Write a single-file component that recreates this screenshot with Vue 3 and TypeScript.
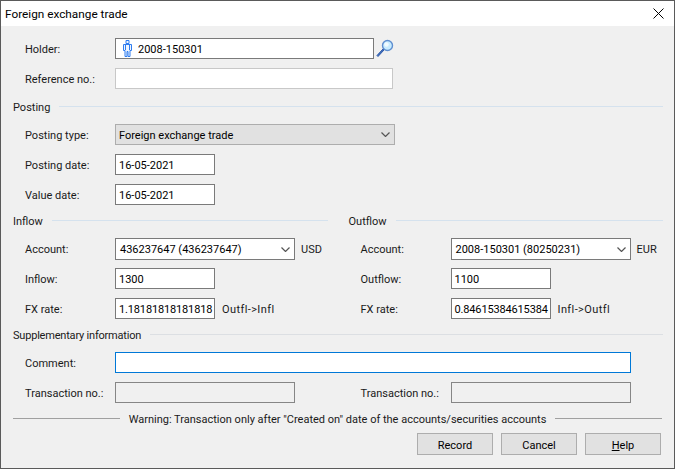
<script setup lang="ts">
interface FlowColumn {
  title: string
  account: string
  currency: string
  amountLabel: string
  amount: string
  rate: string
  direction: string
}

const columns: FlowColumn[] = [
  { title: 'Inflow', account: '436237647 (436237647)', currency: 'USD', amountLabel: 'Inflow:', amount: '1300', rate: '1.18181818181818', direction: 'Outfl->Infl' },
  { title: 'Outflow', account: '2008-150301 (80250231)', currency: 'EUR', amountLabel: 'Outflow:', amount: '1100', rate: '0.84615384615384', direction: 'Infl->Outfl' },
]
</script>

<template>
  <div class="window">
    <header class="titlebar">
      <span class="title">Foreign exchange trade</span>
      <svg class="close" width="11" height="11" viewBox="0 0 11 11">
        <path d="M0.5 0.5L10.5 10.5M10.5 0.5L0.5 10.5" stroke="#000" stroke-width="1" fill="none" />
      </svg>
    </header>

    <main class="body">
      <div class="row first">
        <label class="label">Holder:</label>
        <div class="field holder">
          <svg class="person" width="9" height="17" viewBox="0 0 9 17">
            <path d="M3 .5h3v3h-3zM.5 4.5h8v6h-1.5v6h-2v-5h-1v5h-2v-6h-1.5zM2.5 5v5M6.5 5v5" fill="#eef5ff" stroke="#2f7df0" stroke-width="1" />
          </svg>
          <span>2008-150301</span>
        </div>
        <svg class="search" width="18" height="18" viewBox="0 0 18 18">
          <path d="M1 16.5L2 17.5L8 11L7 10Z" fill="#3f6fc0" stroke="#2f5aa8" stroke-width="1" />
          <circle cx="11.5" cy="6.5" r="5" fill="#c8ecff" stroke="#5f8fd0" stroke-width="1.4" />
          <circle cx="10.5" cy="5.5" r="2.2" fill="#f0fbff" />
        </svg>
      </div>
      <div class="row">
        <label class="label">Reference no.:</label>
        <div class="field reference"></div>
      </div>

      <div class="section"><span>Posting</span><i class="rule blue"></i></div>
      <div class="row after-section">
        <label class="label">Posting type:</label>
        <div class="field combo posting-type">
          <span>Foreign exchange trade</span>
          <svg class="chevron" width="9" height="5" viewBox="0 0 9 5"><path d="M.5 .5L4.5 4.5L8.5 .5" fill="none" stroke="#555" stroke-width="1.2" /></svg>
        </div>
      </div>
      <div class="row">
        <label class="label">Posting date:</label>
        <div class="field short">16-05-2021</div>
      </div>
      <div class="row">
        <label class="label">Value date:</label>
        <div class="field short">16-05-2021</div>
      </div>

      <div class="columns">
        <section v-for="col in columns" :key="col.title" class="column">
          <div class="section"><span>{{ col.title }}</span><i class="rule blue"></i></div>
          <div class="row after-section account">
            <label class="label">Account:</label>
            <div class="field combo account-box">
              <span>{{ col.account }}</span>
              <svg class="chevron" width="9" height="5" viewBox="0 0 9 5"><path d="M.5 .5L4.5 4.5L8.5 .5" fill="none" stroke="#555" stroke-width="1.2" /></svg>
            </div>
            <span class="suffix currency">{{ col.currency }}</span>
          </div>
          <div class="row">
            <label class="label">{{ col.amountLabel }}</label>
            <div class="field short">{{ col.amount }}</div>
          </div>
          <div class="row">
            <label class="label">FX rate:</label>
            <div class="field short rate">{{ col.rate }}</div>
            <span class="suffix direction">{{ col.direction }}</span>
          </div>
        </section>
      </div>

      <div class="section supplementary"><span>Supplementary information</span><i class="rule grey"></i></div>
      <div class="row after-section">
        <label class="label">Comment:</label>
        <div class="field comment"></div>
      </div>
      <div class="columns tx">
        <div class="row column">
          <label class="label">Transaction no.:</label>
          <div class="field tx-box"></div>
        </div>
        <div class="row column">
          <label class="label">Transaction no.:</label>
          <div class="field tx-box"></div>
        </div>
      </div>

      <div class="section warning">
        <i class="rule dark"></i>
        <span>Warning: Transaction only after "Created on" date of the accounts/securities accounts</span>
        <i class="rule dark"></i>
      </div>

      <footer class="buttons">
        <button type="button">Record</button>
        <button type="button">Cancel</button>
        <button type="button"><u>H</u>elp</button>
      </footer>
    </main>
  </div>
</template>

<style>
html, body { margin: 0; padding: 0; background: #f0f0f0; }
</style>

<style scoped>
.window {
  box-sizing: border-box;
  width: 675px;
  height: 469px;
  border: 1px solid #5a5a5a;
  background: #f0f0f0;
  font-family: Roboto, "Noto Sans", sans-serif;
  font-size: 11px;
  color: #1a1a1a;
  display: flex;
  flex-direction: column;
  overflow: hidden;
}
.titlebar {
  height: 25px;
  flex: none;
  background: #fff;
  display: flex;
  align-items: center;
  justify-content: space-between;
  padding: 0 10px 0 4px;
}
.title { font-size: 11.8px; color: #000; }
.body { padding: 0 11px 0 12px; flex: 1; }
.row {
  display: flex;
  align-items: center;
  height: 21px;
  margin-top: 9px;
  padding-left: 12px;
}
.row.first { margin-top: 12px; }
.row.after-section { margin-top: 11px; }
.row.account { height: 22px; margin-bottom: -1px; }
.label { width: 90px; flex: none; padding-top: 2px; }
.field {
  box-sizing: border-box;
  height: 21px;
  flex: none;
  background: #fff;
  border: 1px solid #7a7a7a;
  padding: 2px 3px 0;
  display: flex;
  align-items: center;
  white-space: nowrap;
  color: #000;
}
.field svg { margin-top: -2px; }
.holder { width: 259px; padding-left: 7px; gap: 6px; }
.person { flex: none; }
.search { margin-left: 2px; margin-top: -1px; }
.reference { width: 278px; border-color: #c8c8c8; }
.combo { justify-content: space-between; padding-right: 4px; }
.posting-type { width: 280px; background: #e1e1e1; border-color: #adadad; padding-right: 4px; }
.account-box { width: 180px; height: 22px; padding-left: 4px; padding-top: 0; padding-right: 4px; }
.account-box svg { margin-top: 0; }
.account .label, .account .suffix { padding-top: 0; }
.short { width: 100px; }
.rate { letter-spacing: -0.15px; }
.suffix { margin-left: 6px; padding-top: 2px; }
.direction { margin-left: 7px; letter-spacing: 0.4px; }
.comment { width: 516px; border-color: #0078d7; }
.tx-box { width: 180px; background: #f0f0f0; border-color: #868686; }
.section {
  height: 13px;
  margin-top: 11px;
  display: flex;
  align-items: center;
  gap: 9px;
}
.section span { padding-top: 2px; }
.supplementary span { letter-spacing: -0.2px; }
.rule { flex: 1; height: 1px; display: block; }
.rule.blue { background: #d5e2ee; }
.rule.grey { background: #dcdfe3; }
.rule.dark { background: #a0a0a0; }
.columns { display: flex; gap: 21px; }
.column { flex: 1 1 0; min-width: 0; }
.columns .section { margin-top: 9px; }
.columns + .section { margin-top: 9px; }
.warning { margin-right: 1px; }
.buttons {
  display: flex;
  justify-content: flex-end;
  gap: 8px;
  margin-top: 8px;
  padding-right: 2px;
}
button {
  width: 76px;
  height: 22px;
  box-sizing: border-box;
  background: #e1e1e1;
  border: 1px solid #adadad;
  font: inherit;
  color: #000;
  padding: 2px 0 0;
}
</style>
